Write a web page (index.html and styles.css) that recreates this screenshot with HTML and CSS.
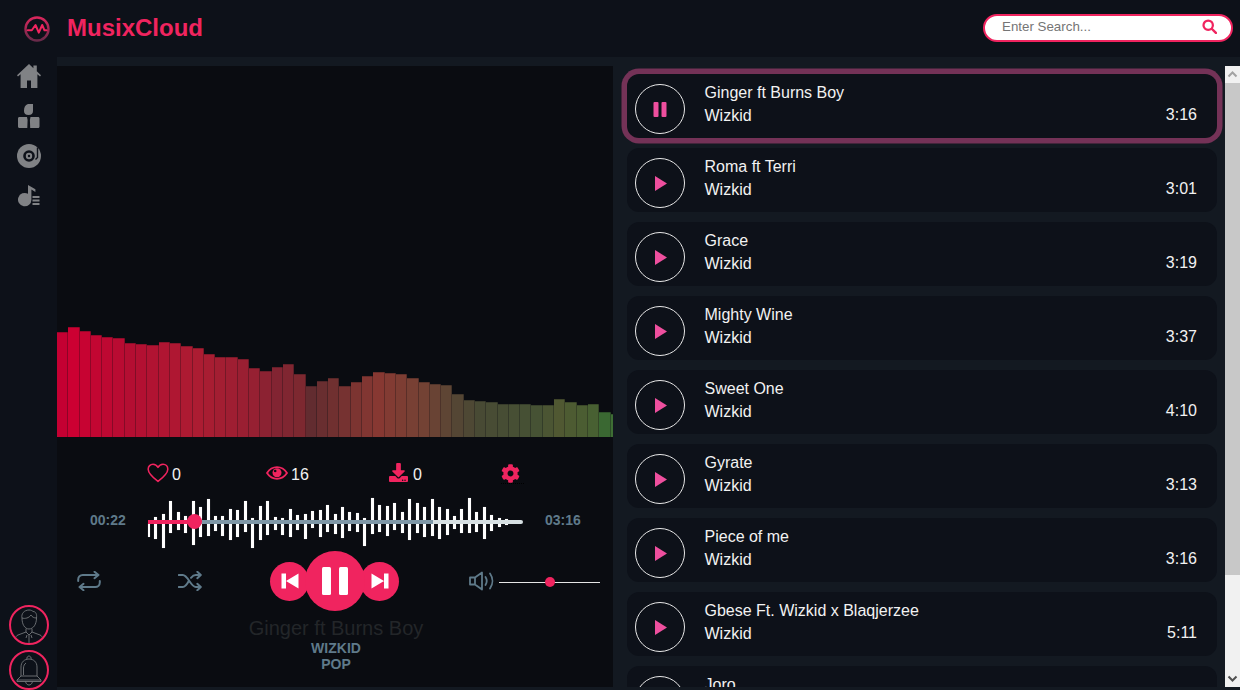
FILE: index.html
```html
<!DOCTYPE html>
<html>
<head>
    <title>MusixCloud</title>
    <link rel="stylesheet" href="styles.css">
</head>
<body>
    <header class="topbar">
        <a class="brand">
            <svg class="brand-logo" viewBox="0 0 26 26">
                <defs>
                    <linearGradient id="logoGrad" x1="0" y1="0" x2="0" y2="1">
                        <stop offset="0" stop-color="#d8265c"/>
                        <stop offset="1" stop-color="#6a2a4a"/>
                    </linearGradient>
                </defs>
                <circle cx="13" cy="13" r="11.500" fill="none" stroke="url(#logoGrad)" stroke-width="2.400"/>
                <path d="M3.800 14.300h4l3.700-5.300 3.300 7.700 3.400-7.700 2.300 5.300h2" fill="none" stroke="#f0245f" stroke-width="2" stroke-linejoin="round" stroke-linecap="round"/>
            </svg>
            <span class="brand-name">MusixCloud</span>
        </a>
        <form class="search">
            <input type="text" placeholder="Enter Search...">
            <svg class="search-icon" viewBox="0 0 16 16">
                <circle cx="6.600" cy="6.600" r="5" fill="none" stroke="#f0245f" stroke-width="2.400"/>
                <path d="M10.400 10.400l4.400 4.400" stroke="#f0245f" stroke-width="2.600" stroke-linecap="round"/>
            </svg>
        </form>
    </header>

    <div class="layout">
        <nav class="sidebar">
            <div class="nav-icons">
                <svg class="nav-icon" viewBox="0 0 24 24"><path d="M12 0L0 11.200l1 1.300L3.600 10.300V24h6.400v-7.500h4V24h6.400V10.300l2.600 2.200 1-1.300-4.200-3.900V1.500h-3.400v2.800z"/></svg>
                <svg class="nav-icon" viewBox="0 0 24 24"><path d="M11 0h5v7c0 2.500-1.500 4-4.500 4S7 9.500 7 7c0-3.500 1-6 4-7zM2.500 13H10l.6 3-.3 8H2.500C1.500 24 1 23.300 1 22.500v-8C1 13.700 1.500 13 2.500 13zM13.500 13H21c1 0 1.500.7 1.500 1.500v8c0 .8-.5 1.500-1.500 1.500h-7.800l-.3-8z"/></svg>
                <svg class="nav-icon" viewBox="0 0 24 24">
                    <circle cx="12" cy="12" r="12"/>
                    <circle cx="12" cy="12" r="5.800" fill="#0d1119"/>
                    <circle cx="12" cy="12" r="3.200"/>
                    <circle cx="12" cy="12" r="1.200" fill="#0d1119"/>
                    <path d="M20.500 3.500v10l-2 2" fill="none" stroke="#0d1119" stroke-width="1.400"/>
                </svg>
                <svg class="nav-icon nav-icon-small" viewBox="0 0 22 22"><path d="M10 0v8.800A6.700 6.700 0 1 0 13.400 14.500V4.500l4 2.500V4.200zM14.500 11h7v2h-7zm0 3.500h7v2h-7zm0 3.500h7v2h-7z"/></svg>
            </div>
            <div class="nav-bottom">
                <div class="round-badge">
                    <svg viewBox="0 0 36 36" class="round-art">
                        <path d="M11 11c-1-4 2-8 7-8 2 0 3 .5 4 1.500 3 0 4 3 3.500 6.500M11 11c0 6 2.500 11 7 11s7.500-5 7.500-11M11 11c3 1 7 0 9-3 1 2 3 3 5.500 3M15 22v3l3 3 3-3v-3M15 25l-8 3c-1.500.5-2.500 2-2.500 4v4M21 25l8 3c1.500.5 2.500 2 2.500 4v4M18 28v8M16 28l-1 3M20 28l1 3"/>
                    </svg>
                </div>
                <div class="round-badge">
                    <svg viewBox="0 0 36 36" class="round-art">
                        <path d="M10 24V15c0-5 3.500-8 8-8s8 3 8 8v9M16 7.500c-.6-2 .6-3.500 2-3.500s2.600 1.500 2 3.500M10 24l-4 4h24l-4-4zM6 28v1.500h24V28M14.500 29.500c.5 2.500 2 3.500 3.500 3.500s3-1 3.500-3.500M12.500 23V16c0-2 1-4 2.500-5"/>
                    </svg>
                </div>
            </div>
        </nav>

        <main class="content">
            <section class="player">
                <div class="visualizer" id="visualizer"></div>

                <div class="stats">
                    <div class="stat stat-like">
                        <svg class="stat-icon heart" viewBox="0 0 24 22"><path d="M12 20.300C5 14.800 1.200 11.200 1.200 6.800 1.200 3.600 3.600 1.300 6.500 1.300c2.200 0 4.300 1.300 5.500 3.500 1.200-2.200 3.300-3.500 5.500-3.500 2.900 0 5.300 2.300 5.300 5.500 0 4.400-3.800 8-10.800 13.500z" fill="none" stroke="#f0245f" stroke-width="1.700" stroke-linejoin="round"/></svg>
                        <span>0</span>
                    </div>
                    <div class="stat stat-views">
                        <svg class="stat-icon eye" viewBox="0 0 22 14"><path d="M1 7c2.500-3.800 6-5.800 10-5.800S18.500 3.200 21 7c-2.500 3.800-6 5.800-10 5.800S3.500 10.800 1 7z" fill="none" stroke="#f0245f" stroke-width="1.800"/><circle cx="11" cy="6.800" r="4.500" fill="#f0245f"/><circle cx="9.200" cy="5" r="1.300" fill="#0a0c11"/></svg>
                        <span>16</span>
                    </div>
                    <div class="stat stat-download">
                        <svg class="stat-icon dl" viewBox="0 0 512 512"><path fill="#f0245f" d="M216 0h80c13.300 0 24 10.700 24 24v168h87.700c17.800 0 26.700 21.500 14.100 34.100L269.700 378.300c-7.500 7.500-19.800 7.500-27.300 0L90.100 226.100c-12.600-12.600-3.700-34.100 14.100-34.100H192V24c0-13.300 10.700-24 24-24zm296 376v112c0 13.300-10.700 24-24 24H24c-13.300 0-24-10.700-24-24V376c0-13.300 10.700-24 24-24h146.700l49 49c20.100 20.100 52.500 20.100 72.600 0l49-49H488c13.300 0 24 10.700 24 24zm-124 88c0-11-9-20-20-20s-20 9-20 20 9 20 20 20 20-9 20-20zm64 0c0-11-9-20-20-20s-20 9-20 20 9 20 20 20 20-9 20-20z"/></svg>
                        <span>0</span>
                    </div>
                    <div class="stat stat-settings">
                        <svg class="stat-icon gear" viewBox="0 0 512 512"><path fill="#f0245f" d="M487.400 315.700l-42.600-24.600c4.300-23.200 4.300-47 0-70.200l42.600-24.600c4.900-2.800 7.100-8.600 5.500-14-11.100-35.600-30-67.800-54.700-94.600-3.800-4.100-10-5.100-14.800-2.300L380.800 110c-17.900-15.400-38.500-27.300-60.800-35.100V25.800c0-5.600-3.900-10.500-9.400-11.700-36.700-8.200-74.300-7.800-109.200 0-5.500 1.200-9.400 6.100-9.400 11.700V75c-22.200 7.900-42.800 19.800-60.800 35.100L88.700 85.500c-4.900-2.800-11-1.900-14.800 2.300-24.700 26.700-43.600 58.900-54.700 94.600-1.700 5.400.6 11.200 5.500 14L67.300 221c-4.300 23.200-4.300 47 0 70.200l-42.600 24.600c-4.900 2.800-7.100 8.600-5.500 14 11.100 35.600 30 67.800 54.700 94.600 3.800 4.100 10 5.100 14.800 2.300l42.600-24.600c17.900 15.400 38.500 27.300 60.800 35.100v49.200c0 5.600 3.900 10.500 9.400 11.700 36.700 8.200 74.300 7.800 109.200 0 5.500-1.200 9.400-6.100 9.400-11.700v-49.200c22.200-7.900 42.800-19.800 60.800-35.100l42.600 24.600c4.900 2.800 11 1.900 14.800-2.300 24.700-26.700 43.600-58.900 54.700-94.600 1.500-5.500-.7-11.300-5.600-14.100zM256 336c-44.100 0-80-35.900-80-80s35.900-80 80-80 80 35.900 80 80-35.900 80-80 80z"/></svg>
                    </div>
                </div>

                <div class="timeline">
                    <span class="time">00:22</span>
                    <div class="wave">
                        <div class="wave-bars" id="waveBars"></div>
                        <div class="wave-line"></div>
                        <div class="wave-buffer"></div>
                        <div class="wave-played"></div>
                        <div class="wave-thumb"></div>
                    </div>
                    <span class="time">03:16</span>
                </div>

                <div class="controls">
                    <svg class="ctrl ctrl-repeat" viewBox="0 0 24 20"><path d="M1.200 10V8.500c0-2.500 2-4.500 4.500-4.500H21M17.500.8L21.500 4l-4 3.200M22.800 10v1.500c0 2.500-2 4.500-4.500 4.500H3M6.500 19.200L2.500 16l4-3.200" fill="none" stroke="#5f7a8a" stroke-width="2" stroke-linejoin="round" stroke-linecap="round"/></svg>
                    <svg class="ctrl ctrl-shuffle" viewBox="0 0 24 20"><path d="M.8 4h4c5 0 8 12 13 12h4.500M.8 16h4c2.500 0 4.300-2.800 6-6M13 6.800c1.300-1.600 2.800-2.800 4.800-2.800h4.500M19.300.8L22.800 4l-3.500 3.200M19.300 12.800l3.500 3.200-3.500 3.200" fill="none" stroke="#5f7a8a" stroke-width="2" stroke-linejoin="round" stroke-linecap="round"/></svg>
                    <div class="transport">
                        <button class="btn-round btn-prev">
                            <svg viewBox="0 0 18 16"><path d="M0.500 0.500h4.500v15H0.500zM17.500 0.500v15L5 8z" fill="#fff"/></svg>
                        </button>
                        <button class="btn-round btn-pause">
                            <svg viewBox="0 0 26 28"><rect x="0" y="0" width="9" height="28" rx="1.500" fill="#fff"/><rect x="17" y="0" width="9" height="28" rx="1.500" fill="#fff"/></svg>
                        </button>
                        <button class="btn-round btn-next">
                            <svg viewBox="0 0 18 16"><path d="M0.500 0.500v15L13 8zM13 0.500h4.500v15H13z" fill="#fff"/></svg>
                        </button>
                    </div>
                    <div class="volume">
                        <svg class="ctrl ctrl-volume" viewBox="0 0 26 20"><path d="M1 6.500h5L13 1.500v17l-7-5H1zM6 6.500v7M16.500 6c1.500 2.400 1.500 5.600 0 8M21 2.500c3.200 4.500 3.200 10.500 0 15" fill="none" stroke="#5f7a8a" stroke-width="1.800" stroke-linejoin="round" stroke-linecap="round"/></svg>
                        <div class="volume-slider"><div class="volume-thumb"></div></div>
                    </div>
                </div>

                <div class="now-playing">
                    <div class="np-title">Ginger ft Burns Boy</div>
                    <div class="np-meta">WIZKID</div>
                    <div class="np-meta">POP</div>
                </div>
            </section>

            <section class="tracks">
                <div class="track active">
                    <div class="track-btn">
                        <svg class="pause-icon" viewBox="0 0 14 15"><rect x="0.500" y="0" width="5" height="15" rx="1"/><rect x="8.500" y="0" width="5" height="15" rx="1"/></svg>
                    </div>
                    <div class="track-info"><div>Ginger ft Burns Boy</div><div>Wizkid</div></div>
                    <div class="track-time">3:16</div>
                </div>
                <div class="track">
                    <div class="track-btn"><svg class="play-icon" viewBox="0 0 12 15"><path d="M0 0l12 7.500L0 15z"/></svg></div>
                    <div class="track-info"><div>Roma ft Terri</div><div>Wizkid</div></div>
                    <div class="track-time">3:01</div>
                </div>
                <div class="track">
                    <div class="track-btn"><svg class="play-icon" viewBox="0 0 12 15"><path d="M0 0l12 7.500L0 15z"/></svg></div>
                    <div class="track-info"><div>Grace</div><div>Wizkid</div></div>
                    <div class="track-time">3:19</div>
                </div>
                <div class="track">
                    <div class="track-btn"><svg class="play-icon" viewBox="0 0 12 15"><path d="M0 0l12 7.500L0 15z"/></svg></div>
                    <div class="track-info"><div>Mighty Wine</div><div>Wizkid</div></div>
                    <div class="track-time">3:37</div>
                </div>
                <div class="track">
                    <div class="track-btn"><svg class="play-icon" viewBox="0 0 12 15"><path d="M0 0l12 7.500L0 15z"/></svg></div>
                    <div class="track-info"><div>Sweet One</div><div>Wizkid</div></div>
                    <div class="track-time">4:10</div>
                </div>
                <div class="track">
                    <div class="track-btn"><svg class="play-icon" viewBox="0 0 12 15"><path d="M0 0l12 7.500L0 15z"/></svg></div>
                    <div class="track-info"><div>Gyrate</div><div>Wizkid</div></div>
                    <div class="track-time">3:13</div>
                </div>
                <div class="track">
                    <div class="track-btn"><svg class="play-icon" viewBox="0 0 12 15"><path d="M0 0l12 7.500L0 15z"/></svg></div>
                    <div class="track-info"><div>Piece of me</div><div>Wizkid</div></div>
                    <div class="track-time">3:16</div>
                </div>
                <div class="track">
                    <div class="track-btn"><svg class="play-icon" viewBox="0 0 12 15"><path d="M0 0l12 7.500L0 15z"/></svg></div>
                    <div class="track-info"><div>Gbese Ft. Wizkid x Blaqjerzee</div><div>Wizkid</div></div>
                    <div class="track-time">5:11</div>
                </div>
                <div class="track">
                    <div class="track-btn"><svg class="play-icon" viewBox="0 0 12 15"><path d="M0 0l12 7.500L0 15z"/></svg></div>
                    <div class="track-info"><div>Joro</div></div>
                </div>
            </section>

            <div class="scrollbar">
                <svg class="scroll-arrow" viewBox="0 0 15 17"><path d="M3.500 10.500l4-4 4 4" fill="none" stroke="#a3a3a3" stroke-width="2"/></svg>
                <div class="scroll-thumb"></div>
                <svg class="scroll-arrow scroll-arrow-down" viewBox="0 0 15 17"><path d="M3.500 6.500l4 4 4-4" fill="none" stroke="#505050" stroke-width="2"/></svg>
            </div>
        </main>
    </div>

    <script src="app.js"></script>
</body>
</html>
```

FILE: styles.css
```css
* { box-sizing: border-box; }
html, body { margin: 0; height: 690px; overflow: hidden; }
body { font-family: "Liberation Sans", Arial, sans-serif; background-color: #0d1119; color: #fff; }

.topbar { height: 57px; display: flex; align-items: center; justify-content: space-between; padding: 0 7px 2px 24px; background-color: #0d1119; }
.brand { display: flex; align-items: center; }
.brand-logo { width: 26px; height: 26px; margin-top: 2px; }
.brand-name { margin-left: 17px; font-size: 24px; font-weight: bold; color: #f0245f; }
.search { position: relative; width: 250px; height: 28px; }
.search input { width: 100%; height: 100%; padding: 0 40px 3px 17px; background: #fff; border: 2px solid #f0245f; border-radius: 14px; font-family: "Liberation Sans", Arial, sans-serif; font-size: 13.330px; outline: none; }
.search input::placeholder { color: #757575; opacity: 1; }
.search-icon { position: absolute; right: 16px; top: 5px; width: 15px; height: 15px; }

.layout { display: flex; height: 633px; }
.sidebar { width: 57px; display: flex; flex-direction: column; justify-content: space-between; align-items: center; padding: 7px 0 0; background-color: #0d1119; }
.nav-icons { display: flex; flex-direction: column; align-items: center; gap: 16px; }
.nav-icon { width: 24px; height: 24px; fill: #808285; display: block; }
.nav-icon-small { width: 22px; height: 22px; margin-top: 1px; }
.nav-bottom { display: flex; flex-direction: column; gap: 5px; }
.round-badge { width: 40px; height: 40px; border: 2px solid #f0245f; border-radius: 50%; display: flex; align-items: center; justify-content: center; overflow: hidden; }
.round-art { width: 36px; height: 36px; fill: none; stroke: #74777b; stroke-width: 0.9; }

.content { flex: 1; display: flex; padding: 9px 0 3px; background-color: #131921; }

.player { width: 556px; display: flex; flex-direction: column; background-color: #0a0c11; }
.visualizer { height: 371px; display: flex; align-items: flex-end; overflow: hidden; }
.viz-bar { flex: 0 0 11.31px; box-shadow: inset -1px 0 rgba(10,12,17,0.3), inset 0 1px rgba(10,12,17,0.25); }

.stats { position: relative; height: 18px; margin-top: 27px; font-size: 16px; }
.stat { position: absolute; top: 0; display: flex; align-items: center; height: 18px; color: #f2f2f2; }
.stat span { margin-top: 3px; }
.stat-like { left: 90px; }
.stat-views { left: 209px; }
.stat-download { left: 332px; }
.stat-settings { left: 444px; height: 20px; padding-right: 4px; border-bottom: 1px dotted #000; }
.stat-icon { display: block; }
.stat-icon.heart { width: 22px; height: 20px; margin-right: 3px; }
.stat-icon.eye { width: 22px; height: 14px; margin-right: 3px; }
.stat-icon.dl { width: 19px; height: 19px; margin: -2px 5px 0 0; }
.stat-icon.gear { width: 19px; height: 19px; }

.timeline { display: flex; align-items: center; margin-top: 14px; height: 50px; padding-left: 33px; }
.time { width: 36px; font-size: 14px; font-weight: bold; color: #5f7a8a; margin-top: -2px; }
.wave { position: relative; width: 375px; height: 50px; margin: 0 22px; }
.wave-bars { display: flex; height: 50px; }
.wave-bar { flex: 0 0 3px; margin-right: 4.480px; background-color: #fff; box-shadow: 0 0 1px rgba(255,255,255,0.5); }
.wave-bar:first-child { flex-basis: 2px; margin-right: 4.250px; }
.wave-line { position: absolute; left: 163px; width: 212px; top: 24px; height: 4px; background-color: #d6dfe2; border-radius: 2px; }
.wave-buffer { position: absolute; left: 47px; width: 238px; top: 24px; height: 4px; background-color: #7e97a6; }
.wave-played { position: absolute; left: 0; width: 47px; top: 24px; height: 4px; background-color: #f0245f; }
.wave-thumb { position: absolute; left: 39px; top: 18px; width: 15px; height: 15px; background-color: #f0245f; border-radius: 50%; }

.controls { display: flex; align-items: center; height: 60px; margin-top: 5px; padding-left: 20px; }
.ctrl { display: block; }
.ctrl-repeat { width: 24px; height: 20px; }
.ctrl-shuffle { width: 24px; height: 20px; margin-left: 77px; }
.transport { display: flex; align-items: center; margin-left: 68px; }
.btn-round { border: 0; padding: 0; background-color: #f0245f; border-radius: 50%; display: flex; align-items: center; justify-content: center; }
.btn-prev { width: 39px; height: 39px; margin-right: -4px; }
.btn-pause { width: 60px; height: 60px; position: relative; z-index: 1; }
.btn-next { width: 39px; height: 39px; margin-left: -5px; }
.btn-prev svg, .btn-next svg { width: 18px; height: 16px; }
.btn-pause svg { width: 26px; height: 28px; }
.volume { display: flex; align-items: center; margin-left: 70px; }
.ctrl-volume { width: 26px; height: 20px; }
.volume-slider { position: relative; width: 101px; height: 1px; margin-left: 4px; margin-top: 2px; background-color: #e6e6e6; }
.volume-thumb { position: absolute; left: 46px; top: -5px; width: 10px; height: 10px; border-radius: 50%; background-color: #f0245f; }

.now-playing { text-align: center; margin-top: 5px; padding-left: 2px; }
.np-title { font-size: 20px; line-height: 24px; color: #232629; }
.np-meta { font-size: 14px; font-weight: bold; line-height: 16px; color: #5f7a8a; }

.tracks { width: 612px; padding: 8px 8px 0 14px; overflow: hidden; }
.track { height: 64px; display: flex; margin-bottom: 10px; padding: 10px 20px 0 8px; background-color: #0d1119; border-radius: 12px; font-size: 16px; color: #f2f2f2; }
.track.active { box-shadow: 0 0 0 5.500px #743257; }
.track-btn { flex: 0 0 50px; height: 50px; border: 1px solid #e8e8e8; border-radius: 50%; display: flex; align-items: center; justify-content: center; }
.play-icon { width: 12px; height: 15px; fill: #ee4f9e; margin-left: 1px; }
.pause-icon { width: 14px; height: 15px; fill: #ee4f9e; }
.track-info { flex: 1; margin-left: 19.500px; line-height: 23px; margin-top: -3px; }
.track-time { line-height: 23px; margin-top: 19px; }

.scrollbar { width: 15px; display: flex; flex-direction: column; background-color: #f1f1f1; }
.scroll-arrow { width: 15px; height: 17px; flex: none; }
.scroll-thumb { height: 492px; background-color: #c8c8c8; }
.scroll-arrow-down { margin-top: auto; }
```

FILE: app.js
```js
// visualizer bar heights, left to right
const barHeights = [105,110,106,102,100,99,94,93,92,95,94,91,89,83,80,80,78,69,66,70,73,63,51,56,59,
    51,55,61,65,64,63,59,55,53,52,43,37,36,35,33,33,33,32,32,38,35,32,33,25,23];

// colour stops: bar index, r, g, b
const barStops = [
    [0, 196, 0, 50], [1, 204, 0, 50], [6, 180, 14, 50], [12, 172, 28, 50], [17, 150, 32, 50],
    [19, 130, 36, 50], [21, 125, 40, 48], [22, 98, 44, 48], [24, 112, 48, 48], [28, 135, 56, 50],
    [32, 115, 66, 52], [35, 84, 70, 52], [37, 72, 74, 52], [42, 70, 82, 52], [44, 80, 88, 50],
    [47, 72, 96, 50], [48, 58, 104, 50], [49, 62, 110, 52]
];

function barColor(i) {
    for (let s = 1; s < barStops.length; s++) {
        const a = barStops[s - 1], b = barStops[s];
        if (i <= b[0]) {
            const t = (i - a[0]) / (b[0] - a[0]);
            return 'rgb(' + [1, 2, 3].map(k => Math.round(a[k] + (b[k] - a[k]) * t)).join(',') + ')';
        }
    }
}

const viz = document.getElementById('visualizer');
barHeights.forEach((h, i) => {
    const bar = document.createElement('div');
    bar.className = 'viz-bar';
    bar.style.height = h + 'px';
    bar.style.backgroundColor = barColor(i);
    viz.appendChild(bar);
});

// waveform: top and bottom of each bar in px inside the wave box
const waveBars = [[26.7,41.3],[20.7,43.3],[18,51.7],[4.7,36.7],[16.3,34],[20,37.3],[5.3,48.7],[11,40.7],[3,40.3],[20,35],
    [20,39.7],[12.7,44],[14,41.3],[4.7,35.7],[22,51.7],[10,44],[4.7,38.7],[21,34],[21.7,39],[13,41.3],
    [19.3,34],[18,42.7],[14.7,31.7],[14,41.3],[9.3,35.7],[18,38.3],[11,42.3],[16.3,34.7],[17,36],[22,49.7],
    [2.3,38.3],[9,35.7],[9.7,39.7],[6.7,34],[16.3,37.3],[3,43.7],[6.7,37.3],[11.3,41.3],[2.7,40],[10.7,43.3],
    [13.3,39.3],[20,33.3],[13.3,36.7],[2.3,37.3],[16.3,35.7],[11.3,43.3],[19,34.7],[21.7,31.3],[23,29.3]];

const wave = document.getElementById('waveBars');
waveBars.forEach(b => {
    const bar = document.createElement('div');
    bar.className = 'wave-bar';
    bar.style.marginTop = b[0] + 'px';
    bar.style.height = (b[1] - b[0]) + 'px';
    wave.appendChild(bar);
});
```
